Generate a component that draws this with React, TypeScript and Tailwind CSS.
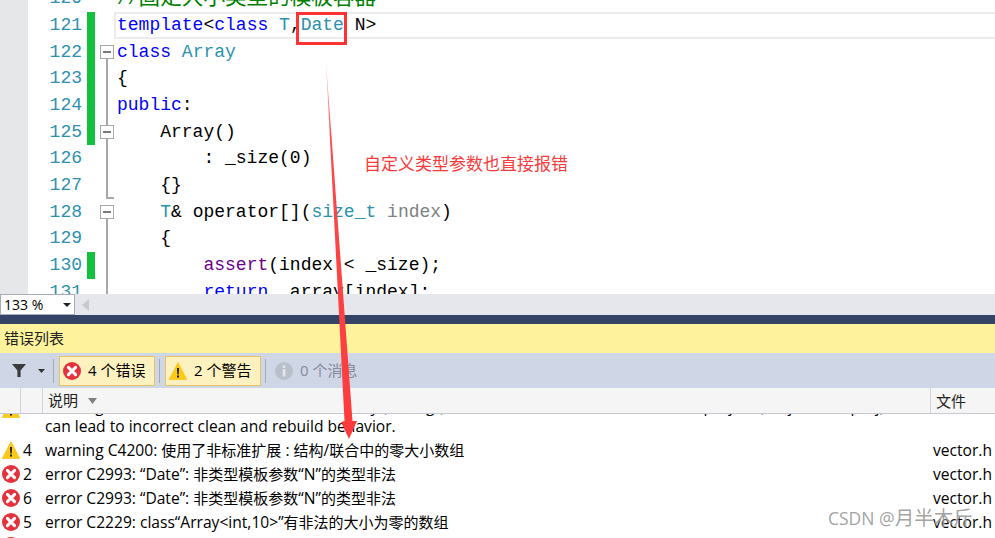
import React from 'react';

const KW = 'text-[#0000ff]';
const TY = 'text-[#2b91af]';
const TX = 'text-black';
const PA = 'text-[#808080]';
const MA = 'text-[#6f008a]';
const UI_FONT = 'font-["Open_Sans","Noto_Sans_CJK_SC",sans-serif]';

type Fold = 'none' | 'open' | 'nested' | 'line' | 'end';
type Line = { n: number; bar?: boolean; fold?: Fold; parts: [string, string][]; current?: boolean };

const lines: Line[] = [
  { n: 120, parts: [] },
  { n: 121, bar: true, current: true, parts: [['template', KW], ['<', TX], ['class', KW], [' ', TX], ['T', TY], [',', TX], ['Date', TY], [' N>', TX]] },
  { n: 122, bar: true, fold: 'open', parts: [['class', KW], [' ', TX], ['Array', TY]] },
  { n: 123, bar: true, fold: 'line', parts: [['{', TX]] },
  { n: 124, bar: true, fold: 'line', parts: [['public', KW], [':', TX]] },
  { n: 125, bar: true, fold: 'nested', parts: [['    Array()', TX]] },
  { n: 126, fold: 'line', parts: [['        : _size(0)', TX]] },
  { n: 127, fold: 'end', parts: [['    {}', TX]] },
  { n: 128, fold: 'open', parts: [['    ', TX], ['T', TY], ['& operator[](', TX], ['size_t', TY], [' ', TX], ['index', PA], [')', TX]] },
  { n: 129, fold: 'line', parts: [['    {', TX]] },
  { n: 130, bar: true, fold: 'line', parts: [['        ', TX], ['assert', MA], ['(index < _size);', TX]] },
  { n: 131, fold: 'line', parts: [['        ', TX], ['return', KW], [' _array[index];', TX]] },
];

const ErrorIcon = ({ size = 18 }: { size?: number }) => (
  <svg width={size} height={size} viewBox="0 0 18 18">
    <circle cx="9" cy="9" r="9" fill="#e3323b" />
    <path d="M5.4 5.4 12.6 12.6M12.6 5.4 5.4 12.6" stroke="#fff" strokeWidth="3" strokeLinecap="round" />
  </svg>
);

const WarnIcon = ({ size = 18 }: { size?: number }) => (
  <svg width={size} height={size} viewBox="0 0 18 18">
    <path d="M9 .5 17.8 17.5H.2Z" fill="#fdcb17" stroke="#f5bd0a" strokeWidth=".6" strokeLinejoin="round" />
    <path d="M8 6h2l-.3 6.5H8.3Z" fill="#1a1a1a" />
    <rect x="8" y="13.5" width="2" height="2" fill="#1a1a1a" />
  </svg>
);

const InfoIcon = () => (
  <svg width="18" height="18" viewBox="0 0 18 18">
    <circle cx="9" cy="9" r="9" fill="#b9c0cc" />
    <rect x="7.8" y="3.5" width="2.6" height="2.4" fill="#e4e7ee" />
    <rect x="7.8" y="7.2" width="2.6" height="7.4" fill="#e4e7ee" />
  </svg>
);

const FoldMark = ({ kind }: { kind: Fold }) => {
  if (kind === 'none') return null;
  return (
    <>
      {kind === 'open' ? (
        <div className="absolute left-[11px] top-1/2 bottom-0 w-[2px] bg-[#a8a8a8]" />
      ) : (
        <div className="absolute left-[11px] top-0 bottom-0 w-[2px] bg-[#a8a8a8]" />
      )}
      {kind === 'end' && <div className="absolute left-[11px] bottom-0 w-[8px] h-[2px] bg-[#a8a8a8]" />}
      {(kind === 'open' || kind === 'nested') && (
        <div className="absolute left-[5px] top-[6px] w-[14px] h-[14px] border border-[#a8a8a8] bg-white flex items-center justify-center">
          <div className="w-[8px] h-[2px] bg-[#777]" />
        </div>
      )}
    </>
  );
};

const CodeRow = ({ line }: { line: Line }) => (
  <div className="flex h-[26.67px] shrink-0 items-stretch">
    <div className="w-[28px] bg-[#e6e7e8]" />
    <div className="w-[54px] text-right text-[#2b91af] leading-[26.67px]">{line.n}</div>
    <div className="w-[5px]" />
    <div className={line.bar ? 'w-[8px] bg-[#12c23f]' : 'w-[8px]'} />
    <div className="relative w-[19px]">
      <FoldMark kind={line.fold ?? 'none'} />
    </div>
    <div
      className={
        line.current
          ? 'flex-1 whitespace-pre pl-[1px] leading-[22.67px] border-y-2 border-l-2 border-[#ececec]'
          : 'flex-1 whitespace-pre pl-[3px] leading-[26.67px]'
      }
    >
      {line.n === 120 ? (
        <span className="inline-block -translate-y-[3px] text-[#008000]">
          //<span className='text-[21.6px] font-["Noto_Sans_CJK_SC",sans-serif]'>固定大小类型的模板容器</span>
        </span>
      ) : (
        line.parts.map(([text, color], i) => (
          <span key={i} className={color}>
            {text}
          </span>
        ))
      )}
    </div>
  </div>
);

// Latin runs are a little larger than the CJK runs in the list
const Mixed = ({ text }: { text: string }) => (
  <>
    {text.split(/([\u4e00-\u9fff]+)/).map((part, i) =>
      i % 2 === 1 ? (
        <span key={i} className="text-[15px]">
          {part}
        </span>
      ) : (
        <span key={i}>{part}</span>
      ),
    )}
  </>
);

type Row = { kind?: 'error' | 'warn'; num?: string; text?: string[]; file?: string; wrapped?: boolean };

const rows: Row[] = [
  {
    kind: 'warn',
    wrapped: true,
    text: [
      'warning MSB8028: The intermediate directory (Debug\\) contains files shared from another project (Project1.vcxproj).  This',
      'can lead to incorrect clean and rebuild behavior.',
    ],
  },
  { kind: 'warn', num: '4', text: ['warning C4200: 使用了非标准扩展 : 结构/联合中的零大小数组'], file: 'vector.h' },
  { kind: 'error', num: '2', text: ['error C2993: “Date”: 非类型模板参数“N”的类型非法'], file: 'vector.h' },
  { kind: 'error', num: '6', text: ['error C2993: “Date”: 非类型模板参数“N”的类型非法'], file: 'vector.h' },
  { kind: 'error', num: '5', text: ['error C2229: class“Array<int,10>”有非法的大小为零的数组'], file: 'vector.h' },
  { kind: 'error' },
];

const ErrorRow = ({ row }: { row: Row }) => (
  <div className={row.wrapped ? 'flex shrink-0 h-[48px] text-[15.6px] leading-[24px] text-black' : 'flex shrink-0 h-[24px] text-[15.6px] leading-[24px] text-black'}>
    <div className={row.wrapped ? 'w-[20px] pl-[2px] mt-[10px]' : 'w-[20px] pl-[2px] mt-[3px]'}>
      {row.kind === 'warn' ? <WarnIcon /> : <ErrorIcon />}
    </div>
    <div className="w-[25px] pl-[3px]">{row.num}</div>
    <div className={row.wrapped ? 'w-[888px] whitespace-nowrap overflow-hidden pt-[6px] leading-[20px]' : 'w-[888px] whitespace-nowrap overflow-hidden'}>
      {row.text?.map((t, i) => (
        <div key={i}>
          <Mixed text={t} />
        </div>
      ))}
    </div>
    <div className="flex-1 whitespace-nowrap">{row.file}</div>
  </div>
);

const Divider = () => <div className="w-[1px] h-[24px] bg-[#a3a9b8]" />;

export default function App() {
  return (
    <div className={`relative w-[995px] h-[538px] overflow-hidden bg-white flex flex-col ${UI_FONT}`}>
      {/* editor */}
      <div className='h-[294px] shrink-0 overflow-hidden font-["Liberation_Mono",monospace] text-[18px]'>
        <div className="flex flex-col mt-[-14.67px]">
          {lines.map((l) => (
            <CodeRow key={l.n} line={l} />
          ))}
        </div>
      </div>

      {/* zoom bar */}
      <div className="h-[21px] shrink-0 bg-[#e6e7ed] flex items-start">
        <div className="w-[75px] h-[21px] bg-white border border-[#a6acbc] flex items-center justify-between pl-[3px] pr-[3px] text-[14px] text-black">
          <span>133 %</span>
          <svg width="8" height="4" viewBox="0 0 8 4">
            <path d="M0 0h8L4 4Z" fill="#222" />
          </svg>
        </div>
        <svg className="ml-[7px] mt-[5px]" width="8" height="12" viewBox="0 0 8 12">
          <path d="M7 0v12L0 6Z" fill="#c7c9d1" />
        </svg>
      </div>
      <div className="h-[9px] shrink-0 bg-[#334466]" />

      {/* title */}
      <div className="h-[29px] shrink-0 bg-[#fff29d] flex items-center pl-[4px] text-[15px] text-[#222]">错误列表</div>

      {/* toolbar */}
      <div className="h-[35px] shrink-0 bg-[#cfd6e5] flex items-center text-[15px]">
        <svg className="ml-[12px]" width="14" height="13" viewBox="0 0 14 13">
          <path d="M0 0h14L8.6 6.5V13H5.4V6.5Z" fill="#3c3c3c" />
        </svg>
        <svg className="ml-[12px] mr-[8px]" width="7" height="4" viewBox="0 0 7 4">
          <path d="M0 0h7L3.5 4Z" fill="#333" />
        </svg>
        <Divider />
        <div className="ml-[5px] w-[96px] h-[30px] bg-[#fdf1bf] border border-[#e5c365] flex items-center pl-[3px] gap-[7px] text-black">
          <ErrorIcon />
          <span>4 个错误</span>
        </div>
        <div className="w-[4px]" />
        <Divider />
        <div className="ml-[5px] w-[96px] h-[30px] bg-[#fdf1bf] border border-[#e5c365] flex items-center pl-[3px] gap-[7px] text-black">
          <WarnIcon />
          <span>2 个警告</span>
        </div>
        <div className="w-[4px]" />
        <Divider />
        <div className="ml-[9px] flex items-center gap-[7px] text-[#858b9c]">
          <InfoIcon />
          <span>0 个消息</span>
        </div>
      </div>

      {/* column header */}
      <div className="h-[26px] shrink-0 bg-[#f5f5f5] border-b border-[#c9c9d6] flex text-[15px] text-[#222] leading-[27px]">
        <div className="w-[21px] border-r border-[#d3d3dd]" />
        <div className="w-[22px] border-r border-[#d3d3dd]" />
        <div className="w-[888px] border-r border-[#d3d3dd] pl-[5px] flex items-center gap-[10px]">
          <span>说明</span>
          <svg width="9" height="6" viewBox="0 0 9 6">
            <path d="M0 0h9L4.5 6Z" fill="#808080" />
          </svg>
        </div>
        <div className="pl-[5px]">文件</div>
      </div>

      {/* rows */}
      <div className="flex-1 overflow-hidden">
        <div className="flex flex-col mt-[-24px]">
          {rows.map((r, i) => (
            <ErrorRow key={i} row={r} />
          ))}
        </div>
      </div>

      {/* annotations drawn over the screenshot */}
      <div className="absolute left-[296px] top-[12px] w-[51px] h-[33px] border-[3px] border-[#ff3333]" />
      <div className='absolute left-[364px] top-[152px] text-[17px] leading-[22px] text-[#f93a3a] font-["Noto_Sans_CJK_SC",sans-serif] whitespace-nowrap'>
        自定义类型参数也直接报错
      </div>
      <svg className="absolute left-0 top-0 pointer-events-none" width="995" height="538" viewBox="0 0 995 538">
        <defs>
          <linearGradient id="arrowFade" x1="0" y1="62" x2="0" y2="439" gradientUnits="userSpaceOnUse">
            <stop offset="0" stopColor="#ffc4c4" />
            <stop offset="0.2" stopColor="#fb4a4a" />
            <stop offset="1" stopColor="#fd3a3c" />
          </linearGradient>
        </defs>
        <path d="M326 62 352.5 421 357 421 349 439 341 422 344.5 421Z" fill="url(#arrowFade)" />
      </svg>
      <div className='absolute left-[828px] top-[505px] text-[17.5px] leading-[26px] text-[#8a8a8a]/80 font-["Open_Sans","Noto_Sans_CJK_SC",sans-serif] whitespace-nowrap [text-shadow:0_0_2px_rgba(255,255,255,0.8)]'>
        CSDN @<span className="text-[19.5px]">月半木斤</span>
      </div>
    </div>
  );
}
